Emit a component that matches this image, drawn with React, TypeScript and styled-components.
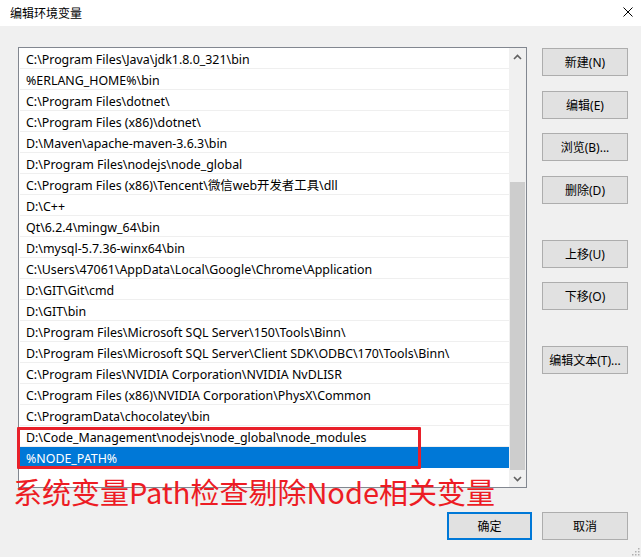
import React, { FC } from "react";
import styled, { createGlobalStyle } from "styled-components";

const GlobalStyle = createGlobalStyle`
  html, body {
    margin: 0;
    padding: 0;
    background: #f0f0f0;
  }
  * {
    box-sizing: border-box;
  }
`;

const paths = [
  "C:\\Program Files\\Java\\jdk1.8.0_321\\bin",
  "%ERLANG_HOME%\\bin",
  "C:\\Program Files\\dotnet\\",
  "C:\\Program Files (x86)\\dotnet\\",
  "D:\\Maven\\apache-maven-3.6.3\\bin",
  "D:\\Program Files\\nodejs\\node_global",
  "C:\\Program Files (x86)\\Tencent\\微信web开发者工具\\dll",
  "D:\\C++",
  "Qt\\6.2.4\\mingw_64\\bin",
  "D:\\mysql-5.7.36-winx64\\bin",
  "C:\\Users\\47061\\AppData\\Local\\Google\\Chrome\\Application",
  "D:\\GIT\\Git\\cmd",
  "D:\\GIT\\bin",
  "D:\\Program Files\\Microsoft SQL Server\\150\\Tools\\Binn\\",
  "D:\\Program Files\\Microsoft SQL Server\\Client SDK\\ODBC\\170\\Tools\\Binn\\",
  "C:\\Program Files\\NVIDIA Corporation\\NVIDIA NvDLISR",
  "C:\\Program Files (x86)\\NVIDIA Corporation\\PhysX\\Common",
  "C:\\ProgramData\\chocolatey\\bin",
  "D:\\Code_Management\\nodejs\\node_global\\node_modules",
  "%NODE_PATH%",
];

const sideButtons = [
  { label: "新建(N)", top: 0 },
  { label: "编辑(E)", top: 15 },
  { label: "浏览(B)...", top: 14 },
  { label: "删除(D)", top: 15 },
  { label: "上移(U)", top: 36 },
  { label: "下移(O)", top: 14 },
  { label: "编辑文本(T)...", top: 36 },
];

const uiFont = `"Noto Sans", "Noto Sans CJK SC", sans-serif`;

const Window = styled.div`
  position: relative;
  width: 641px;
  height: 557px;
  background: #f0f0f0;
  display: flex;
  flex-direction: column;
  font-family: ${uiFont};
  font-size: 12px;
  color: #000;
  overflow: hidden;
`;

const TitleBar = styled.div`
  height: 26px;
  background: #fff;
  display: flex;
  align-items: center;
  justify-content: space-between;
  padding: 0 8px 2px 10px;
`;

const Title = styled.span`
  font-family: "Noto Sans CJK SC", sans-serif;
  font-size: 12px;
`;

const CloseIcon = styled.svg`
  width: 10px;
  height: 10px;
`;

const Body = styled.div`
  display: flex;
  gap: 15px;
  padding: 21px 13px 0 18px;
`;

const ListBox = styled.div`
  width: 509px;
  height: 441px;
  border: 1px solid #828790;
  background: #fff;
  display: flex;
`;

const Rows = styled.div`
  flex: 1;
  padding-left: 1px;
`;

const Row = styled.div<{ $selected?: boolean }>`
  height: 21px;
  line-height: 24px;
  padding-left: 6px;
  font-size: 12.4px;
  border-bottom: 1px solid ${(p) => (p.$selected ? "#0078d7" : "#efefef")};
  background: ${(p) => (p.$selected ? "#0078d7" : "#fff")};
  color: ${(p) => (p.$selected ? "#fff" : "#000")};
  white-space: nowrap;
  overflow: hidden;
`;

const ScrollBar = styled.div`
  width: 17px;
  background: #f0f0f0;
  display: flex;
  flex-direction: column;
`;

const ScrollArrow = styled.div`
  height: 17px;
  display: flex;
  align-items: center;
  justify-content: center;
`;

const Track = styled.div`
  flex: 1;
  display: flex;
  flex-direction: column;
  justify-content: flex-end;
  padding: 0 1px;
`;

const Thumb = styled.div`
  height: 288px;
  background: #cdcdcd;
`;

const ButtonColumn = styled.div`
  display: flex;
  flex-direction: column;
  padding-top: 1px;
`;

const Button = styled.button<{ $top?: number; $default?: boolean }>`
  width: 86px;
  height: 28px;
  margin-top: ${(p) => p.$top ?? 0}px;
  background: #e1e1e1;
  border: ${(p) => (p.$default ? "2px solid #0078d7" : "1px solid #adadad")};
  font-family: ${uiFont};
  font-size: 12px;
  color: #000;
  padding: 0;
`;

const Footer = styled.div`
  display: flex;
  justify-content: flex-end;
  gap: 10px;
  padding: 24px 13px 0 0;
`;

const Grip = styled.svg`
  position: absolute;
  right: 1px;
  bottom: 1px;
  width: 10px;
  height: 10px;
`;

const Highlight = styled.div`
  position: absolute;
  left: 17px;
  top: 427px;
  width: 404px;
  height: 42px;
  border: 3px solid #e8202a;
  border-radius: 1px;
`;

const Note = styled.div`
  position: absolute;
  left: 13px;
  top: 470px;
  font-family: "Noto Sans CJK SC", sans-serif;
  font-size: 29px;
  line-height: 42px;
  color: #ed1c24;
  white-space: nowrap;
`;

const Chevron: FC<{ up?: boolean }> = ({ up }) => (
  <svg width="9" height="6" viewBox="0 0 9 6">
    <path
      d={up ? "M1 5 L4.5 1.5 L8 5" : "M1 1 L4.5 4.5 L8 1"}
      fill="none"
      stroke="#606060"
      strokeWidth="1.6"
    />
  </svg>
);

const App: FC = () => {
  return (
    <Window>
      <GlobalStyle />
      <TitleBar>
        <Title>编辑环境变量</Title>
        <CloseIcon viewBox="0 0 10 10">
          <path d="M0.5 0.5 L9.5 9.5 M9.5 0.5 L0.5 9.5" stroke="#000" strokeWidth="1" />
        </CloseIcon>
      </TitleBar>
      <Body>
        <ListBox>
          <Rows>
            {paths.map((p, i) => (
              <Row key={p} $selected={i === paths.length - 1}>
                {p}
              </Row>
            ))}
          </Rows>
          <ScrollBar>
            <ScrollArrow>
              <Chevron up />
            </ScrollArrow>
            <Track>
              <Thumb />
            </Track>
            <ScrollArrow>
              <Chevron />
            </ScrollArrow>
          </ScrollBar>
        </ListBox>
        <ButtonColumn>
          {sideButtons.map((b) => (
            <Button key={b.label} $top={b.top}>
              {b.label}
            </Button>
          ))}
        </ButtonColumn>
      </Body>
      <Footer>
        <Button $default style={{ width: 85 }}>确定</Button>
        <Button>取消</Button>
      </Footer>
      <Grip viewBox="0 0 10 10">
        {[
          [8, 2],
          [8, 5],
          [5, 5],
          [8, 8],
          [5, 8],
          [2, 8],
        ].map(([x, y]) => (
          <rect key={`${x}-${y}`} x={x} y={y} width="1.5" height="1.5" fill="#b0b0b0" />
        ))}
      </Grip>
      <Highlight />
      <Note>系统变量Path检查剔除Node相关变量</Note>
    </Window>
  );
};

export default App;
